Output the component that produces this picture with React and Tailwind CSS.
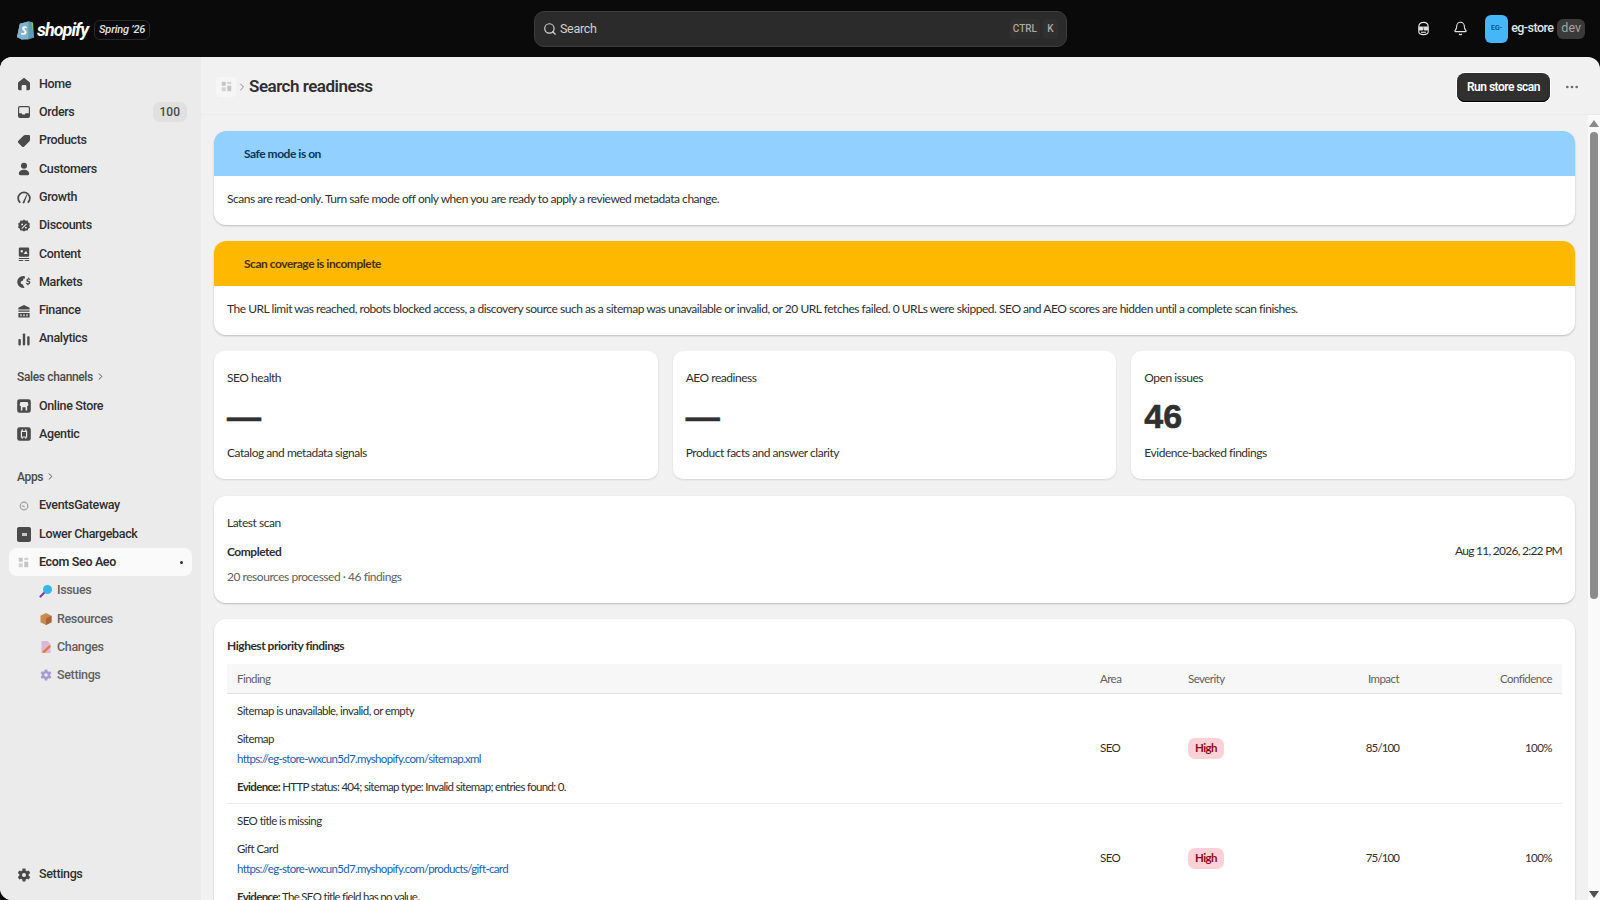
import React from 'react';
import { Search, Bell, ChevronRight, MoreHorizontal } from 'lucide-react';

const nav = 'font-[Roboto,sans-serif]';

// filled nav icons, drawn on a 20 x 20 box
const icons = {
  home: <path d="M10 2.200 3.300 7.400c-.5.4-.8 1-.8 1.600v7c0 1 .8 1.800 1.800 1.800H7v-5a1.500 1.500 0 0 1 1.500-1.500h3a1.500 1.500 0 0 1 1.500 1.500v5h2.700c1 0 1.800-.8 1.800-1.800V9c0-.6-.3-1.200-.8-1.600L10 2.200Z" />,
  orders: <path fillRule="evenodd" d="M5 2.500A2.500 2.500 0 0 0 2.500 5v10A2.500 2.500 0 0 0 5 17.500h10a2.500 2.500 0 0 0 2.500-2.500V5A2.500 2.500 0 0 0 15 2.500H5Zm-1 9V5c0-.6.4-1 1-1h10c.6 0 1 .4 1 1v6.500h-3.500c-.6 0-1 .4-1.200.9l-.3.600H8l-.3-.6c-.2-.5-.6-.9-1.200-.9H4Z" />,
  products: <path d="M11.500 2.500H16A1.500 1.500 0 0 1 17.500 4v4.500c0 .8-.3 1.500-.9 2.100l-6.300 6.300a2 2 0 0 1-2.800 0l-4.500-4.500a2 2 0 0 1 0-2.800l6.300-6.300c.6-.6 1.300-.8 2.200-.8Z" />,
  customers: <><circle cx="10" cy="6" r="3.800" /><path d="M3.500 16c0-3 2.800-5 6.500-5s6.500 2 6.500 5c0 1-.8 1.800-1.800 1.800H5.300c-1 0-1.800-.8-1.800-1.800Z" /></>,
  growth: <><path d="M4.700 16.500a7.300 7.300 0 1 1 10.600 0" fill="none" stroke="currentColor" strokeWidth="2.200" strokeLinecap="round" /><path d="M8.200 16.800 13.200 7l.9.400-3.600 10.100a1.300 1.300 0 0 1-2.300-.7Z" /></>,
  discounts: <path fillRule="evenodd" d="m10 1.800 2 1.500 2.500-.2.800 2.400 2.100 1.400-.7 2.500.7 2.500-2.100 1.400-.8 2.400-2.500-.2-2 1.500-2-1.500-2.500.2-.8-2.400-2.100-1.400.7-2.500-.7-2.500 2.100-1.400.8-2.400 2.500.2 2-1.500Zm-2.300 5a1.200 1.200 0 1 0 0 2.400 1.200 1.200 0 0 0 0-2.400Zm4.600 4a1.200 1.200 0 1 0 0 2.400 1.200 1.200 0 0 0 0-2.400Zm.4-4-6 6 .9.900 6-6-.9-.9Z" />,
  content: <path fillRule="evenodd" d="M5 2h10a1.500 1.500 0 0 1 1.500 1.500v8.500A1.500 1.500 0 0 1 15 13.500H5A1.500 1.500 0 0 1 3.500 12V3.500A1.500 1.500 0 0 1 5 2Zm2.200 3a1.500 1.500 0 1 0 0 3 1.500 1.500 0 0 0 0-3Zm5.300 1-3 4h5l-2-4ZM3.500 15h13v1.400h-13V15Zm0 2.500h5.500v1.300H3.500v-1.300Zm7.500 0h5.500v1.300H11v-1.300Z" />,
  markets: <path fillRule="evenodd" d="M9 2.500a7.500 7.500 0 0 0 0 15c.7 0 1.300-.1 1.900-.3-.6-.4-1-1-1.200-1.700l-1.200-2.300-2.500-1.200V9.500l2.500-1 1-3h1.800c-.2-1.200-.2-2-.3-2.800Zm6.200 1.800v1.200c-1.300.2-2.200 1-2.200 2.200 0 2.600 3.300 1.800 3.300 3.100 0 .5-.5.8-1.200.8-.8 0-1.500-.4-1.900-.9l-1 1c.5.700 1.200 1.100 2 1.300v1.200h1.400v-1.200c1.300-.2 2.300-1 2.300-2.300 0-2.700-3.300-1.900-3.300-3.100 0-.4.400-.7 1-.7.600 0 1.200.3 1.600.700l1-1c-.5-.6-1.100-.9-1.800-1.100V4.300h-1.200Z" />,
  finance: <path fillRule="evenodd" d="M10 2.500 3 6v2h14V6l-7-3.500ZM3 9.500h14V11H3V9.500Zm0 3h14V18H3v-5.500Zm2.500 1.500v2.500H7V14H5.500Zm3.700 0v2.500h1.600V14H9.200Zm3.800 0v2.500h1.500V14H13Z" />,
  analytics: <><rect x="3" y="10" width="3" height="8" rx="1" /><rect x="8.500" y="3" width="3" height="15" rx="1" /><rect x="14" y="6.500" width="3" height="11.500" rx="1" /></>,
  settings: <path fillRule="evenodd" d="M8.300 2h3.400l.5 2.400 1.500.9 2.300-.8 1.700 3-1.800 1.600v1.800l1.800 1.600-1.700 3-2.300-.8-1.500.9-.5 2.400H8.300l-.5-2.400-1.500-.9-2.300.8-1.700-3 1.800-1.600V9.100L2.300 7.500l1.700-3 2.300.8 1.500-.9L8.300 2ZM10 7.500a2.500 2.500 0 1 0 0 5 2.500 2.500 0 0 0 0-5Z" />,
  store: <path fillRule="evenodd" d="M4.500 1.500h11a3 3 0 0 1 3 3v11a3 3 0 0 1-3 3h-11a3 3 0 0 1-3-3v-11a3 3 0 0 1 3-3Zm1 3.500-1 3.500c0 1 .8 1.500 1.500 1.500V15.500h8V10c.7 0 1.500-.5 1.500-1.500L14.500 5h-9ZM8 11.500h4v4H8v-4Z" />,
  agentic: <path fillRule="evenodd" d="M4.500 1.500h11a3 3 0 0 1 3 3v11a3 3 0 0 1-3 3h-11a3 3 0 0 1-3-3v-11a3 3 0 0 1 3-3ZM7 4v2H6v8.500h1V16h1.500v-1.500h3V16H13v-1.500h1V6h-1V4h-1.500v2h-3V4H7Zm.5 3.500h5v5.500h-5V7.500Z" />,
};

const NavIcon = ({ name }) => (
  <svg viewBox="0 0 20 20" fill="currentColor" className="h-[16px] w-[16px] shrink-0 text-[#4a4a4a]">
    {icons[name]}
  </svg>
);

const mainNav = [
  { icon: 'home', label: 'Home' },
  { icon: 'orders', label: 'Orders', badge: '100' },
  { icon: 'products', label: 'Products' },
  { icon: 'customers', label: 'Customers' },
  { icon: 'growth', label: 'Growth' },
  { icon: 'discounts', label: 'Discounts' },
  { icon: 'content', label: 'Content' },
  { icon: 'markets', label: 'Markets' },
  { icon: 'finance', label: 'Finance' },
  { icon: 'analytics', label: 'Analytics' },
];

const NavRow = ({ icon, label, badge }) => (
  <div className="flex h-[28.3px] items-center pl-[16px] pr-[14px]">
    <NavIcon name={icon} />
    <span className="ml-[7px] text-[12.500px] font-medium tracking-[-0.35px] text-[#303030]">{label}</span>
    {badge && (
      <span className="ml-auto flex h-[20px] items-center rounded-[7px] bg-[#e0e0e0] px-[7px] text-[12px] font-medium text-[#4a4a4a]">
        {badge}
      </span>
    )}
  </div>
);

const SectionLabel = ({ label }) => (
  <div className="flex h-[28px] items-center pl-[17px] text-[12px] font-medium tracking-[-0.35px] text-[#4a4a4a]">
    {label}
    <ChevronRight className="ml-[2px] h-[11px] w-[11px]" strokeWidth={2} />
  </div>
);

const AppGlyph = () => (
  <svg viewBox="0 0 14 14" className="h-[11px] w-[11px] shrink-0">
    <rect x="1" y="1" width="5" height="5" fill="#c4c4c4" />
    <rect x="8" y="1" width="5" height="3" fill="#d2d2d2" />
    <rect x="1" y="8" width="5" height="5" fill="#d2d2d2" />
    <rect x="8" y="6" width="5" height="7" fill="#c4c4c4" />
  </svg>
);

const subIcons = {
  Issues: (
    <svg viewBox="0 0 14 14" className="h-[14px] w-[14px]">
      <path d="M5 9 1.500 12.500" stroke="#7a3f9a" strokeWidth="2.200" strokeLinecap="round" />
      <circle cx="8.500" cy="5.500" r="4.500" fill="#38b6e8" />
    </svg>
  ),
  Resources: (
    <svg viewBox="0 0 14 14" className="h-[14px] w-[14px]">
      <path d="M7 1 12.500 3.800v6.400L7 13 1.500 10.200V3.800L7 1Z" fill="#c98a4e" />
      <path d="M7 6.500 12.500 3.800v6.400L7 13V6.500Z" fill="#a8653a" />
    </svg>
  ),
  Changes: (
    <svg viewBox="0 0 14 14" className="h-[14px] w-[14px]">
      <path d="M2.500 1h6l3 3v9h-9V1Z" fill="#d9b8d8" />
      <path d="M4 11 10.500 5l1.500 1.500L6 12.500l-2.500.5.500-2Z" fill="#e8773a" />
    </svg>
  ),
  Settings: (
    <svg viewBox="0 0 20 20" className="h-[14px] w-[14px]" fill="#a49bd0">
      {icons.settings}
    </svg>
  ),
};

const Sidebar = () => (
  <aside className={`flex w-[201px] shrink-0 flex-col bg-[#ebebeb] pt-[13px] ${nav}`}>
    {mainNav.map((item) => (
      <NavRow key={item.label} {...item} />
    ))}
    <div className="mb-[1px] mt-[10px]">
      <SectionLabel label="Sales channels" />
    </div>
    <NavRow icon="store" label="Online Store" />
    <NavRow icon="agentic" label="Agentic" />
    <div className="mb-[1px] mt-[14px]">
      <SectionLabel label="Apps" />
    </div>
    <div className="flex h-[28.3px] items-center pl-[18px]">
      <svg viewBox="0 0 14 14" fill="none" stroke="#9a9a9a" strokeWidth="1.300" className="h-[12px] w-[12px] shrink-0">
        <circle cx="7" cy="7" r="4.500" />
        <path d="M4.500 7h2l1 1.500" />
      </svg>
      <span className="ml-[9px] text-[12.500px] font-medium tracking-[-0.35px] text-[#303030]">EventsGateway</span>
    </div>
    <div className="flex h-[28.3px] items-center pl-[17px]">
      <span className="flex h-[15px] w-[14px] shrink-0 items-center justify-center rounded-[2px] bg-[#4a4a4a]">
        <span className="h-[3px] w-[5px] bg-[#c8c8c8]" />
      </span>
      <span className="ml-[8px] text-[12.500px] font-medium tracking-[-0.35px] text-[#303030]">Lower Chargeback</span>
    </div>
    <div className="mx-[9px] flex h-[28.3px] items-center rounded-[8px] bg-[#fafafa] pl-[9px] pr-[9px]">
      <AppGlyph />
      <span className="ml-[10px] text-[12.500px] font-semibold tracking-[-0.35px] text-[#303030]">Ecom Seo Aeo</span>
      <span className="ml-auto h-[3px] w-[3px] rounded-full bg-[#303030]" />
    </div>
    {['Issues', 'Resources', 'Changes', 'Settings'].map((label) => (
      <div key={label} className="flex h-[28.3px] items-center pl-[39px]">
        {subIcons[label]}
        <span className="ml-[4px] text-[12.500px] font-medium tracking-[-0.35px] text-[#616161]">{label}</span>
      </div>
    ))}
    <div className="mt-auto pb-[11px]">
      <NavRow icon="settings" label="Settings" />
    </div>
  </aside>
);

const TopBar = () => (
  <header className="relative flex h-[57px] items-center bg-[#0a0a0a] pl-[17px] pr-[15px]">
    <div className="flex w-[517px] items-center">
      <svg viewBox="0 0 18 22" className="h-[24px] w-[17px] shrink-0">
        <path d="M3 5.500 12 3l5 1 1 16-13 2-5-2.500L3 5.500Z" fill="#95bf47" />
        <path d="M3 5.500 12 3v19l-7 0-5-2.500L3 5.500Z" fill="#7fb0d8" />
        <path d="M12 3l3 .5 3 16.500-6 2V3Z" fill="#5a9bc0" />
        <path d="M10 8.500C7 7.500 5 9 5.500 11c.4 1.600 2.800 2 2.500 3.500-.2 1-1.800 1-3.300.2l-.5 2c2.500 1 5.800.6 6-2.200.1-2.200-2.600-2.800-2.600-4 0-.7 1.300-.8 2.400-.3l.5-1.700Z" fill="#fff" />
      </svg>
      <span className="ml-[3px] mt-[2px] font-[Roboto,sans-serif] text-[18px] font-bold italic tracking-[-1px] text-white">
        shopify
      </span>
      <span className="ml-[6px] mt-[3px] flex h-[20px] items-center rounded-[6px] border border-[#2a2a2a] px-[4px] font-[Roboto,sans-serif] text-[11px] font-medium italic tracking-[-0.2px] text-[#e3e3e3]">
        Spring ’26
      </span>
    </div>
    <div className={`flex h-[36px] w-[533px] items-center rounded-[10px] border border-[#3d3d3d] bg-[#2b2b2b] pl-[8px] pr-[8px] ${nav}`}>
      <Search className="h-[14px] w-[14px] text-[#d6d6d6]" strokeWidth={2} />
      <span className="ml-[3px] pt-[1px] text-[12.500px] tracking-[-0.3px] text-[#d0d0d0]">Search</span>
      <span className="ml-auto flex h-[20px] items-center rounded-[4px] bg-[#303030] px-[3px] text-[10px] font-medium text-[#a8a8a8]">CTRL</span>
      <span className="ml-[3px] flex h-[20px] w-[15px] items-center justify-center rounded-[4px] bg-[#303030] text-[10px] font-medium text-[#a8a8a8]">K</span>
    </div>
    <div className={`ml-auto flex items-center ${nav}`}>
      <svg viewBox="0 0 16 16" fill="none" stroke="#e3e3e3" strokeWidth="1.200" className="h-[15px] w-[15px]">
        <path d="M3 6c0-3 2-4.500 5-4.500S13 3 13 6v5.500c0 1.800-2.200 3-5 3s-5-1.200-5-3V6Z" />
        <path d="M3 6.500h10" />
        <rect x="3.500" y="7" width="3.800" height="2.600" rx="1" fill="#e3e3e3" />
        <rect x="8.700" y="7" width="3.800" height="2.600" rx="1" fill="#e3e3e3" />
        <path d="M5.500 12h5" />
      </svg>
      <Bell className="ml-[22px] h-[15px] w-[15px] text-[#e3e3e3]" strokeWidth={1.800} />
      <span className="ml-[17px] flex h-[28px] w-[23px] items-center justify-center rounded-[6px] bg-[#45b6f7] text-[7px] font-medium text-[#0b4a70]">
        EG-
      </span>
      <span className="ml-[3px] text-[12.500px] font-medium tracking-[-0.55px] text-[#e3e3e3]">eg-store</span>
      <span className="ml-[4px] flex h-[20px] items-center rounded-[6px] bg-[#3a3a3a] px-[4px] text-[12.500px] text-[#a3a3a3]">dev</span>
    </div>
  </header>
);

const Banner = ({ title, tone, titleColor, children }) => (
  <section className="shrink-0 overflow-hidden rounded-[12px] bg-white shadow-[0_1px_2px_rgba(0,0,0,0.22)]">
    <div className={`flex h-[45px] items-center pl-[30px] font-bold ${tone} ${titleColor}`}>{title}</div>
    <div className="flex h-[48.500px] items-center px-[13px] pb-[3px] text-[#303030]">{children}</div>
  </section>
);

const metrics = [
  { label: 'SEO health', value: '—', note: 'Catalog and metadata signals' },
  { label: 'AEO readiness', value: '—', note: 'Product facts and answer clarity' },
  { label: 'Open issues', value: '46', note: 'Evidence-backed findings' },
];

const findings = [
  {
    title: 'Sitemap is unavailable, invalid, or empty',
    resource: 'Sitemap',
    url: 'https://eg-store-wxcun5d7.myshopify.com/sitemap.xml',
    evidence: 'HTTP status: 404; sitemap type: Invalid sitemap; entries found: 0.',
    impact: '85/100',
  },
  {
    title: 'SEO title is missing',
    resource: 'Gift Card',
    url: 'https://eg-store-wxcun5d7.myshopify.com/products/gift-card',
    evidence: 'The SEO title field has no value.',
    impact: '75/100',
  },
];

const FindingsTable = () => (
  <table className="w-full table-fixed border-collapse text-[11.500px] tracking-[-0.55px] text-[#303030]">
    <colgroup>
      <col className="w-[863px]" />
      <col className="w-[88px]" />
      <col className="w-[161px]" />
      <col className="w-[60px]" />
      <col />
    </colgroup>
    <thead>
      <tr className="h-[29px] border-b border-[#e1e1e1] bg-[#f7f7f7] text-left text-[#616161]">
        <th className="pl-[10px] pt-[1px] font-normal">Finding</th>
        <th className="pl-[10px] pt-[1px] font-normal">Area</th>
        <th className="pl-[10px] pt-[1px] font-normal">Severity</th>
        <th className="pt-[1px] text-right font-normal">Impact</th>
        <th className="pr-[10px] pt-[1px] text-right font-normal">Confidence</th>
      </tr>
    </thead>
    <tbody>
      {findings.map((row) => (
        <tr key={row.title} className="h-[110px] border-b border-[#ebebeb]">
          <td className="pb-[6px] pl-[10px] pt-[7px]">
            <p className="leading-[20px]">{row.title}</p>
            <p className="mt-[8px] leading-[20px]">{row.resource}</p>
            <p className="leading-[20px] tracking-[-0.68px] text-[#1b5fb0]">{row.url}</p>
            <p className="mt-[8px] leading-[20px] tracking-[-0.68px]">
              <b className="font-bold">Evidence:</b> {row.evidence}
            </p>
          </td>
          <td className="pl-[10px]">SEO</td>
          <td className="pl-[10px]">
            <span className="inline-flex h-[21px] items-center rounded-[7px] bg-[#fed1d7] px-[7px] font-bold text-[#8e0b21]">
              High
            </span>
          </td>
          <td className="text-right tracking-[-0.9px]">{row.impact}</td>
          <td className="pr-[10px] text-right">100%</td>
        </tr>
      ))}
    </tbody>
  </table>
);

const Scrollbar = () => (
  <div className="flex w-[12px] shrink-0 flex-col items-end bg-[#fafafa] pr-[1px] pt-[5px]">
    <span className="h-0 w-0 border-x-[5px] border-b-[7px] border-x-transparent border-b-[#8a8a8a]" />
    <span className="mr-[1px] mt-[5px] h-[467px] w-[8px] rounded-full bg-[#8c8c8c]" />
    <span className="mb-[2px] mt-auto h-0 w-0 border-x-[5px] border-t-[7px] border-x-transparent border-t-[#505050]" />
  </div>
);

const App = () => (
  <div className="flex h-screen w-full flex-col overflow-hidden bg-[#0a0a0a] font-[Lato,sans-serif]">
    <TopBar />
    <div className="flex min-h-0 flex-1 overflow-hidden rounded-t-[12px] rounded-bl-[12px] bg-[#f1f1f1]">
      <Sidebar />
      <main className="flex min-w-0 flex-1 flex-col text-[12px] tracking-[-0.47px]">
        <div className="flex h-[58px] shrink-0 items-center border-b border-[#ebebeb] pl-[15px] pr-[20px] pt-[2px]">
          <span className="flex h-[20px] w-[20px] items-center justify-center rounded-[4px] bg-[#f6f6f6]">
            <AppGlyph />
          </span>
          <ChevronRight className="h-[12px] w-[12px] text-[#8a8a8a]" />
          <h1 className={`ml-[1px] text-[17px] font-semibold tracking-[-0.5px] text-[#303030] ${nav}`}>Search readiness</h1>
          <button className={`ml-auto mt-[1px] flex h-[29px] items-center rounded-[8px] bg-[#303030] px-[10px] text-[12px] font-semibold tracking-[-0.5px] text-white shadow-[0_0_0_1px_#fff,inset_0_-1px_0_#000] ${nav}`}>
            Run store scan
          </button>
          <MoreHorizontal className="ml-[14px] h-[16px] w-[16px] text-[#6b6b6b]" />
        </div>
        <div className="flex min-h-0 flex-1 overflow-hidden">
          <div className="flex min-w-0 flex-1 flex-col gap-[16.500px] pl-[13px] pr-[13px] pt-[16px]">
            <Banner title="Safe mode is on" tone="bg-[#91d0ff]" titleColor="text-[#00385c]">
              Scans are read-only. Turn safe mode off only when you are ready to apply a reviewed metadata change.
            </Banner>
            <Banner title="Scan coverage is incomplete" tone="bg-[#ffb800]" titleColor="text-[#4a2f00]">
              The URL limit was reached, robots blocked access, a discovery source such as a sitemap was unavailable or invalid, or 20 URL fetches failed. 0 URLs were skipped. SEO and AEO scores are hidden until a complete scan finishes.
            </Banner>

            <div className="grid shrink-0 grid-cols-3 gap-[15px]">
              {metrics.map((m) => (
                <section key={m.label} className="h-[128px] rounded-[10px] bg-white px-[13px] pt-[19px] shadow-[0_1px_2px_rgba(0,0,0,0.12)]">
                  <p className="leading-[16px] text-[#303030]">{m.label}</p>
                  <p className="mt-[8px] h-[44px] font-['Liberation_Sans',sans-serif] text-[34px] font-bold leading-[44px] tracking-normal text-[#303030] [-webkit-text-stroke:0.6px_#303030]">{m.value}</p>
                  <p className="mt-[7px] leading-[16px] text-[#303030]">{m.note}</p>
                </section>
              ))}
            </div>

            <section className="flex h-[107px] shrink-0 items-start justify-between rounded-[12px] bg-white px-[13px] pt-[19px] shadow-[0_1px_2px_rgba(0,0,0,0.22)]">
              <div className="leading-[16px]">
                <p className="text-[#303030]">Latest scan</p>
                <p className="mt-[13px] font-bold text-[#303030]">Completed</p>
                <p className="mt-[9px] text-[#616161]">20 resources processed · 46 findings</p>
              </div>
              <p className="mt-[28px] leading-[16px] tracking-[-0.75px] text-[#303030]">Aug 11, 2026, 2:22 PM</p>
            </section>

            <section className="shrink-0 rounded-[12px] bg-white px-[13px] pt-[19px] shadow-[0_1px_2px_rgba(0,0,0,0.22)]">
              <h2 className="mb-[10px] font-bold leading-[16px] text-[#303030]">Highest priority findings</h2>
              <FindingsTable />
            </section>
          </div>
          <Scrollbar />
        </div>
      </main>
    </div>
  </div>
);

export default App;
